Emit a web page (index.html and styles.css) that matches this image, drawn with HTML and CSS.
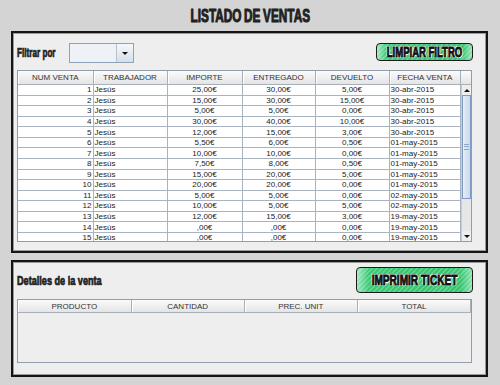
FILE: index.html
```html
<!DOCTYPE html>
<html lang="es">

<head>
    <meta charset="UTF-8">
    <title>Listado de ventas</title>
    <link rel="stylesheet" href="styles.css">
</head>

<body>
    <div class="title"><span class="heavy">LISTADO DE VENTAS</span></div>

    <div class="panel sales">
        <div class="toolbar">
            <div class="filter">
                <label class="filter-label"><span class="heavy">Filtrar por</span></label>
                <div class="combo">
                    <div class="combo-btn"><i class="tri down"></i></div>
                </div>
            </div>
            <button class="btn small" type="button"><span class="heavy">LIMPIAR FILTRO</span></button>
        </div>

        <div class="grid">
            <div class="grid-main">
                <table class="sheet">
                    <colgroup>
                        <col style="width:75px"><col style="width:74px"><col style="width:75px">
                        <col style="width:73px"><col style="width:74px"><col>
                    </colgroup>
                    <thead>
                        <tr>
                            <th>NUM VENTA</th><th>TRABAJADOR</th><th>IMPORTE</th>
                            <th>ENTREGADO</th><th>DEVUELTO</th><th>FECHA VENTA</th>
                        </tr>
                    </thead>
                    <tbody>
                        <tr><td class="r">1</td><td>Jesús</td><td class="c">25,00€</td><td class="c">30,00€</td><td class="c">5,00€</td><td>30-abr-2015</td></tr>
                        <tr><td class="r">2</td><td>Jesús</td><td class="c">15,00€</td><td class="c">30,00€</td><td class="c">15,00€</td><td>30-abr-2015</td></tr>
                        <tr><td class="r">3</td><td>Jesús</td><td class="c">5,00€</td><td class="c">5,00€</td><td class="c">0,00€</td><td>30-abr-2015</td></tr>
                        <tr><td class="r">4</td><td>Jesús</td><td class="c">30,00€</td><td class="c">40,00€</td><td class="c">10,00€</td><td>30-abr-2015</td></tr>
                        <tr><td class="r">5</td><td>Jesús</td><td class="c">12,00€</td><td class="c">15,00€</td><td class="c">3,00€</td><td>30-abr-2015</td></tr>
                        <tr><td class="r">6</td><td>Jesús</td><td class="c">5,50€</td><td class="c">6,00€</td><td class="c">0,50€</td><td>01-may-2015</td></tr>
                        <tr><td class="r">7</td><td>Jesús</td><td class="c">10,00€</td><td class="c">10,00€</td><td class="c">0,00€</td><td>01-may-2015</td></tr>
                        <tr><td class="r">8</td><td>Jesús</td><td class="c">7,50€</td><td class="c">8,00€</td><td class="c">0,50€</td><td>01-may-2015</td></tr>
                        <tr><td class="r">9</td><td>Jesús</td><td class="c">15,00€</td><td class="c">20,00€</td><td class="c">5,00€</td><td>01-may-2015</td></tr>
                        <tr><td class="r">10</td><td>Jesús</td><td class="c">20,00€</td><td class="c">20,00€</td><td class="c">0,00€</td><td>01-may-2015</td></tr>
                        <tr><td class="r">11</td><td>Jesús</td><td class="c">5,00€</td><td class="c">5,00€</td><td class="c">0,00€</td><td>02-may-2015</td></tr>
                        <tr><td class="r">12</td><td>Jesús</td><td class="c">10,00€</td><td class="c">5,00€</td><td class="c">5,00€</td><td>02-may-2015</td></tr>
                        <tr><td class="r">13</td><td>Jesús</td><td class="c">12,00€</td><td class="c">15,00€</td><td class="c">3,00€</td><td>19-may-2015</td></tr>
                        <tr><td class="r">14</td><td>Jesús</td><td class="c">,00€</td><td class="c">,00€</td><td class="c">0,00€</td><td>19-may-2015</td></tr>
                        <tr><td class="r">15</td><td>Jesús</td><td class="c">,00€</td><td class="c">,00€</td><td class="c">0,00€</td><td>19-may-2015</td></tr>
                    </tbody>
                </table>
            </div>
            <div class="vscroll">
                <div class="corner"></div>
                <div class="arrow"><i class="tri up"></i></div>
                <div class="track">
                    <div class="thumb"><i class="grip"></i></div>
                </div>
                <div class="arrow"><i class="tri down"></i></div>
            </div>
        </div>
    </div>

    <div class="panel detail">
        <div class="toolbar">
            <label class="detail-label"><span class="heavy">Detalles de la venta</span></label>
            <button class="btn big" type="button"><span class="heavy">IMPRIMIR TICKET</span></button>
        </div>

        <div class="grid detail-grid">
            <table class="sheet">
                <thead>
                    <tr><th>PRODUCTO</th><th>CANTIDAD</th><th>PREC. UNIT</th><th>TOTAL</th></tr>
                </thead>
            </table>
        </div>
    </div>
</body>

</html>
```

FILE: styles.css
```css
body {
    margin: 0;
    width: 500px;
    height: 385px;
    overflow: hidden;
    background-color: #d4d4d4;
    font-family: "Liberation Sans", Arial, sans-serif;
    color: #222;
}

/* squashed heavy lettering used for title, labels and buttons */
.heavy {
    display: inline-block;
    font-family: "Liberation Sans", Arial, sans-serif;
    font-weight: bold;
    white-space: nowrap;
    transform-origin: left center;
}

.title {
    height: 31px;
    display: flex;
    justify-content: center;
    align-items: center;
}

.title .heavy {
    font-size: 19px;
    word-spacing: -1px;
    color: #222;
    transform: scaleX(0.62);
    transform-origin: center;
    text-shadow: 0 0 1px #888;
    -webkit-text-stroke: 0.9px #222;
}

.panel {
    margin: 0 12px 0 11px;
    border: 2px solid #151515;
    background-color: #eeeeee;
    box-sizing: border-box;
    box-shadow: inset 0 0 0 1px #9a9a9a;
}

.sales {
    height: 222px;
    padding: 10px 14px 0 4px;
}

.detail {
    height: 117px;
    margin-top: 7px;
    padding: 5px 14px 0 4px;
}

.toolbar {
    display: flex;
    justify-content: space-between;
    align-items: flex-start;
}

.filter {
    display: flex;
    align-items: center;
    height: 20px;
}

.filter-label {
    width: 52px;
    font-size: 12px;
}

.filter-label .heavy {
    transform: scaleX(0.68);
    -webkit-text-stroke: 0.7px #222;
}

.combo {
    width: 65px;
    height: 20px;
    box-sizing: border-box;
    border: 1px solid #8ea2ba;
    background-color: #eef1f5;
    display: flex;
    justify-content: flex-end;
}

.combo-btn {
    width: 16px;
    border-left: 1px solid #b4c0ce;
    background: linear-gradient(#f5f7fa, #d7dfe9);
    display: flex;
    justify-content: center;
    align-items: center;
}

.tri {
    width: 0;
    height: 0;
    border-left: 3px solid transparent;
    border-right: 3px solid transparent;
}

.tri.down {
    border-top: 3px solid #111;
}

.tri.up {
    border-bottom: 3px solid #111;
}

.btn {
    display: flex;
    justify-content: center;
    align-items: center;
    padding: 0;
    margin-right: -1px;
    border: 1.5px solid #1b1b1b;
    border-radius: 4px;
    box-sizing: border-box;
    background:
        repeating-linear-gradient(135deg, rgba(255, 255, 255, 0.22) 0 1.5px, transparent 1.5px 3.5px),
        linear-gradient(90deg, #9be8bb 0, #3cca77 10%, #34c46f 90%, #8fe4b1 100%);
    color: #111;
    cursor: pointer;
}

.btn .heavy {
    transform-origin: center;
    text-shadow: -1px 0 #fff, 1px 0 #fff, 0 -1px #fff, 0 1px #fff, 1px 1px #fff, -1px -1px #fff;
    -webkit-text-stroke: 0.9px #111;
}

.btn.small {
    width: 97px;
    height: 18px;
    font-size: 14px;
}

.btn.small .heavy {
    transform: scaleX(0.68);
}

.btn.big {
    width: 117px;
    height: 26px;
    font-size: 14px;
}

.btn.big .heavy {
    transform: scaleX(0.72);
}

.grid {
    margin-top: 7px;
    height: 172px;
    display: flex;
    border: 1px solid #929dab;
    box-sizing: border-box;
    overflow: hidden;
    background-color: #fff;
}

.grid-main {
    flex: 1;
    overflow: hidden;
}

.sheet {
    width: 100%;
    table-layout: fixed;
    border-collapse: collapse;
    font-size: 8px;
    color: #222;
}

.sheet th {
    height: 13px;
    padding: 0;
    font-weight: normal;
    color: #333;
    background: linear-gradient(#fbfbfb, #e4e4e4);
    border-right: 1px solid #a7afb9;
    border-bottom: 1px solid #a7afb9;
    box-shadow: inset 1px 0 #fff;
}

.sheet td {
    height: 9.57px;
    padding: 0 1px;
    line-height: 9px;
    white-space: nowrap;
    overflow: hidden;
    border-right: 1px solid #aab3c0;
    border-bottom: 1px solid #aab3c0;
}

.sheet td.r {
    text-align: right;
}

.sheet td.c {
    text-align: center;
}

.vscroll {
    width: 10px;
    display: flex;
    flex-direction: column;
    background-color: #ececec;
}

.corner {
    height: 14px;
    box-sizing: border-box;
    background: linear-gradient(#fbfbfb, #e4e4e4);
    border-bottom: 1px solid #a7afb9;
}

.arrow {
    height: 10px;
    display: flex;
    justify-content: center;
    align-items: center;
    background-color: #eeeeee;
    border-left: 1px solid #c6ccd4;
}

.track {
    flex: 1;
    background-color: #e6e6e6;
    border-left: 1px solid #c6ccd4;
}

.thumb {
    height: 104px;
    box-sizing: border-box;
    border: 1px solid #7f9dc4;
    background: linear-gradient(90deg, #e6eef8, #c9d9ee);
    display: flex;
    justify-content: center;
    align-items: center;
}

.grip {
    width: 5px;
    height: 4px;
    border-top: 1px solid #8fa6c4;
    border-bottom: 1px solid #8fa6c4;
    background: linear-gradient(transparent 1px, #8fa6c4 1px, #8fa6c4 2px, transparent 2px);
}

.detail-label {
    font-size: 12px;
    margin-top: 7px;
}

.detail-label .heavy {
    transform: scaleX(0.76);
    -webkit-text-stroke: 0.7px #222;
}

.detail-grid {
    margin-top: 6px;
    height: 64px;
    display: block;
    background-color: #eeeeee;
}

.detail-grid .sheet th {
    height: 12px;
}
```
